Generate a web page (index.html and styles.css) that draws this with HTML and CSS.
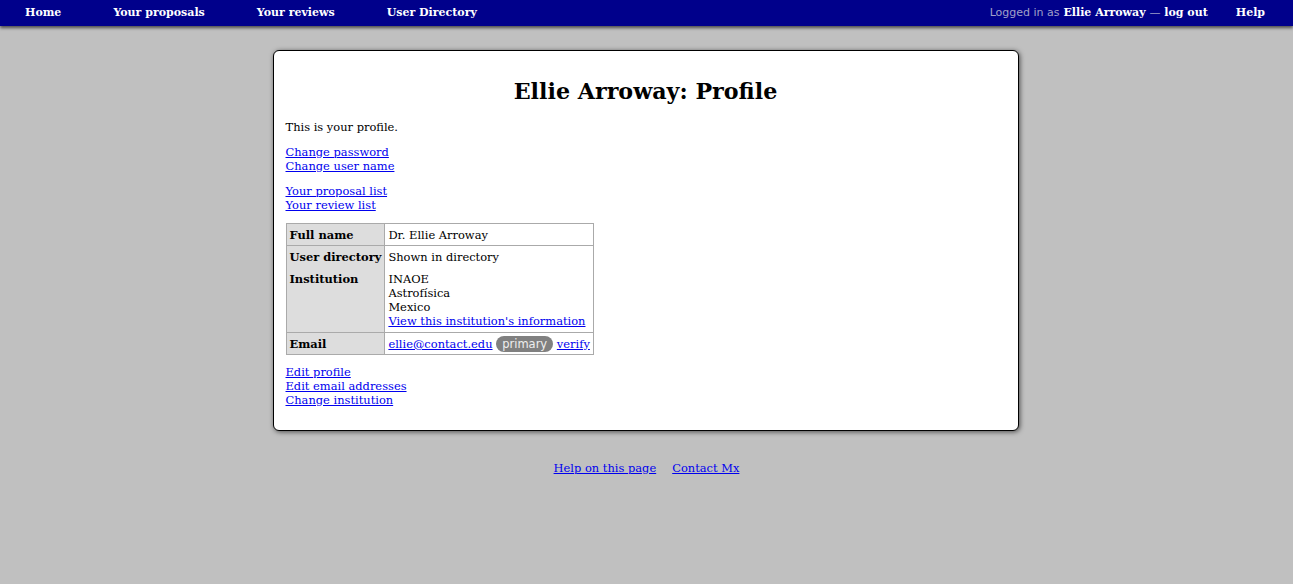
FILE: index.html
```html
<!DOCTYPE html>
<html lang="en">
<head>
    <meta charset="UTF-8">
    <title>Ellie Arroway: Profile</title>
    <link rel="stylesheet" href="styles.css">
</head>
<body>
    <div class="nav">
        <div class="nav-left">
            <a href="#">Home</a>
            <a href="#">Your proposals</a>
            <a href="#">Your reviews</a>
            <a href="#">User Directory</a>
        </div>
        <div class="nav-right">
            <span class="login"><span class="dim">Logged in as</span> <b>Ellie Arroway</b> <span class="dim">&mdash;</span> <a class="inline" href="#">log out</a></span>
            <a href="#">Help</a>
        </div>
    </div>

    <div class="main">
        <h1>Ellie Arroway: Profile</h1>
        <p>This is your profile.</p>
        <p>
            <a href="#">Change password</a><br>
            <a href="#">Change user name</a>
        </p>
        <p>
            <a href="#">Your proposal list</a><br>
            <a href="#">Your review list</a>
        </p>

        <table class="details">
            <tbody>
                <tr>
                    <th>Full name</th>
                    <td>Dr. Ellie Arroway</td>
                </tr>
            </tbody>
            <tbody>
                <tr>
                    <th>User directory</th>
                    <td>Shown in directory</td>
                </tr>
                <tr class="spaced">
                    <th>Institution</th>
                    <td>
                        INAOE<br>
                        Astrofísica<br>
                        Mexico<br>
                        <a href="#">View this institution's information</a>
                    </td>
                </tr>
            </tbody>
            <tbody>
                <tr>
                    <th>Email</th>
                    <td><a href="#">ellie@contact.edu</a> <span class="badge">primary</span> <a href="#">verify</a></td>
                </tr>
            </tbody>
        </table>

        <p>
            <a href="#">Edit profile</a><br>
            <a href="#">Edit email addresses</a><br>
            <a href="#">Change institution</a>
        </p>
    </div>

    <div class="footer">
        <a href="#">Help on this page</a>
        <a href="#">Contact Mx</a>
    </div>
</body>
</html>
```

FILE: styles.css
```css
body {
    margin: 0;
    background-color: #c0c0c0;
    font-family: "DejaVu Serif", serif;
    font-size: 11.45px;
    line-height: 14px;
    color: #000;
}
a {
    color: #0000ee;
}
.nav {
    display: flex;
    justify-content: space-between;
    align-items: center;
    height: 26px;
    background: #00008b;
    box-shadow: 0 2px 3px rgba(0,0,0,0.6);
    font-size: 11px;
    font-weight: bold;
}
.nav a {
    color: #fff;
    text-decoration: none;
    padding: 0 26px;
}
.nav-left {
    margin-left: -1px;
}
.nav-left, .nav-right {
    display: flex;
    align-items: center;
}
.login {
    color: #fff;
}
.login .dim {
    color: #a0a0c8;
    font-family: "DejaVu Sans", sans-serif;
    font-weight: normal;
}
.nav .login a.inline {
    padding: 0;
}
.nav-right > a {
    padding: 0 28px;
}
.main {
    width: 720px;
    margin: 24px 0 0 calc(50% - 374px);
    padding: 1px 12px 12px;
    background: #fff;
    border: 1px solid #000;
    border-radius: 6px;
    box-shadow: 1px 1px 5px rgba(0,0,0,0.6);
}
h1 {
    text-align: center;
    font-size: 22.2px;
    line-height: 26px;
    margin: 26px 0 16px;
}
p {
    margin: 11px 0;
}
.details {
    border-collapse: collapse;
    border: 1px solid #aaa;
    margin-bottom: -1px;
}
.details tbody {
    border-top: 1px solid #aaa;
}
.details th {
    background: #ddd;
    text-align: left;
    vertical-align: top;
    padding: 4px 3px 3px;
    border-right: 1px solid #aaa;
}
.details td {
    padding: 4px 3px 3px;
    vertical-align: top;
}
.details tr.spaced th, .details tr.spaced td {
    padding-top: 5px;
    padding-bottom: 4px;
}
.badge {
    background: #808080;
    color: #eee;
    font-family: "DejaVu Sans", sans-serif;
    font-size: 11.5px;
    padding: 1px 6px;
    border-radius: 8px;
}
.footer {
    display: flex;
    justify-content: center;
    gap: 16px;
    margin-top: 30px;
}
```
